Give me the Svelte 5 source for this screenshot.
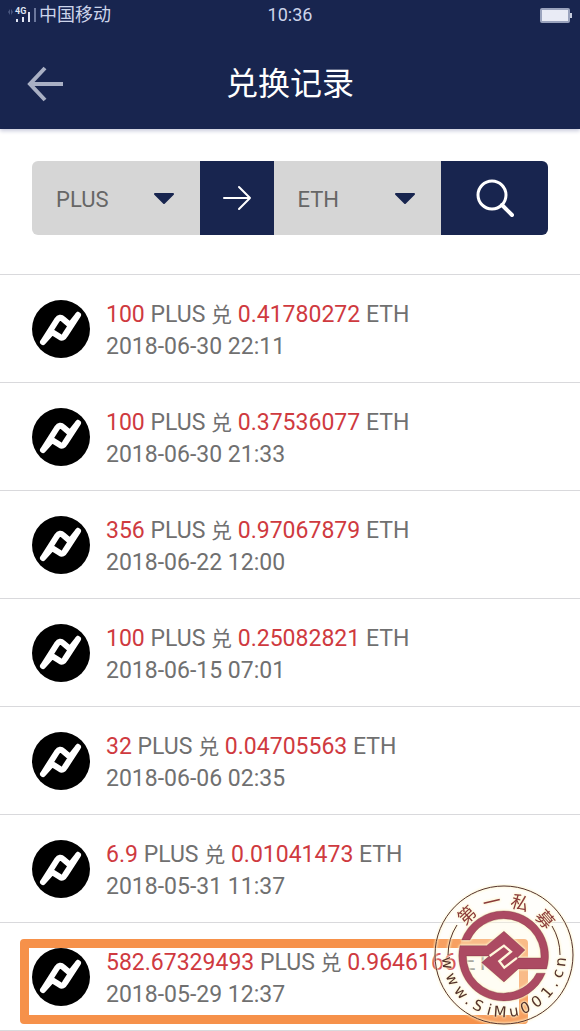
<script>
    let fromCoin = "PLUS";
    let toCoin = "ETH";

    const coins = ["PLUS", "ETH"];

    const records = [
        { pay: "100", get: "0.41780272", time: "2018-06-30 22:11" },
        { pay: "100", get: "0.37536077", time: "2018-06-30 21:33" },
        { pay: "356", get: "0.97067879", time: "2018-06-22 12:00" },
        { pay: "100", get: "0.25082821", time: "2018-06-15 07:01" },
        { pay: "32", get: "0.04705563", time: "2018-06-06 02:35" },
        { pay: "6.9", get: "0.01041473", time: "2018-05-31 11:37" },
        { pay: "582.67329493", get: "0.9646166", time: "2018-05-29 12:37", marked: true }
    ];

    // Seal lettering: character and its angle on the ring
    const sealTop = [["第", -43], ["一", -13], ["私", 17], ["募", 49]];
    const sealBottom = [
        ["w", 82], ["w", 65], ["w", 49], [".", 38], ["S", 27], ["i", 15], ["M", 4],
        ["u", -10], ["0", -22], ["0", -35], ["1", -49], [".", -60], ["c", -71], ["n", -83]
    ];
</script>

<main class="screen">
    <header>
        <div class="status">
            <div class="carrier">
                <svg width="32" height="22" viewBox="0 0 32 22" aria-hidden="true">
                    <path d="M3 5l-2 3 2 3zM4 5l2 3-2 3z" fill="#4a5880" />
                    <text x="8" y="10" class="net">4G</text>
                    <path d="M10 15v3M16 13v5M22 8v10" stroke="#dfe4f2" stroke-width="2" />
                    <path d="M28 4v14" stroke="#6b779c" stroke-width="2" />
                </svg>
                <span>中国移动</span>
            </div>
            <time>10:36</time>
            <svg class="battery" width="33" height="15" viewBox="0 0 33 15" aria-hidden="true">
                <rect x="1" y="1" width="28" height="13" rx="1" fill="#e9ebf5" stroke="#9aa3bd" stroke-width="2" />
                <rect x="30" y="5" width="2" height="5" fill="#c5cbdc" />
            </svg>
        </div>
        <nav>
            <button class="back" aria-label="返回">
                <svg width="38" height="36" viewBox="0 0 38 36" fill="none" stroke="#a9b0c4" stroke-width="4">
                    <path d="M19 2L4 18l15 16M4 18h33" />
                </svg>
            </button>
            <h1>兑换记录</h1>
        </nav>
    </header>

    <form class="filter" on:submit|preventDefault>
        <div class="picker">
            <select aria-label="支付币种" bind:value={fromCoin}>
                {#each coins as coin}
                    <option>{coin}</option>
                {/each}
            </select>
            <svg width="22" height="13" viewBox="0 0 22 13" aria-hidden="true">
                <path d="M2 2h18l-9 9z" fill="#18254f" stroke="#18254f" stroke-width="2" stroke-linejoin="round" />
            </svg>
        </div>
        <button type="button" class="swap" aria-label="互换">
            <svg width="30" height="26" viewBox="0 0 30 26" fill="none" stroke="#fff" stroke-width="2" stroke-linecap="round" stroke-linejoin="round">
                <path d="M2 13h26M17 2l11 11-11 11" />
            </svg>
        </button>
        <div class="picker">
            <select aria-label="兑换币种" bind:value={toCoin}>
                {#each coins as coin}
                    <option>{coin}</option>
                {/each}
            </select>
            <svg width="22" height="13" viewBox="0 0 22 13" aria-hidden="true">
                <path d="M2 2h18l-9 9z" fill="#18254f" stroke="#18254f" stroke-width="2" stroke-linejoin="round" />
            </svg>
        </div>
        <button class="search" aria-label="搜索">
            <svg width="38" height="38" viewBox="0 0 38 38" fill="none" stroke="#fff" stroke-width="3" stroke-linecap="round">
                <circle cx="16" cy="16" r="14" />
                <path d="M26 26l10 10" stroke-width="4" />
            </svg>
        </button>
    </form>

    <ul>
        {#each records as item}
            <li class:marked={item.marked}>
                <svg class="coin" viewBox="0 0 58 58" aria-hidden="true">
                    <circle cx="29" cy="29" r="29" />
                    <path
                        d="M11 42L25 20Q28 16 31 19L38 25L46 15M11 42L20 32L28 37Q31 39 33 35L46 15"
                        fill="none" stroke="#fff" stroke-width="6" stroke-linecap="round" stroke-linejoin="round"
                    />
                </svg>
                <div class="info">
                    <p><b>{item.pay}</b> PLUS <span>兑</span> <b>{item.get}</b> ETH</p>
                    <p>{item.time}</p>
                </div>
            </li>
        {/each}
    </ul>

    <svg class="seal" width="142" height="142" viewBox="0 0 142 142">
        <circle cx="71" cy="71" r="69" fill="#fffbe6" fill-opacity="0.15" />
        <circle cx="71" cy="71" r="45" fill="#fffbe6" fill-opacity="0.3" />
        <g class="glow">
            <circle cx="71" cy="71" r="69" fill="none" stroke="#54322c" stroke-width="1" />
            <path d="M24 41A56 56 0 0 0 15 71M119 42A56 56 0 0 1 127 71" fill="none" stroke="#54322c" stroke-width="1" />
            {#each sealTop as [char, angle]}
                <text class="top" x="71" y="23" transform="rotate({angle} 71 71)">{char}</text>
            {/each}
            {#each sealBottom as [char, angle]}
                <text class="bottom" x="71" y="133" transform="rotate({angle} 71 71)">{char}</text>
            {/each}
            <g transform="translate(22 21) scale(0.333)">
                <path
                    d="M20 105A135 135 0 0 1 146 18A135 135 0 0 1 275 192H190L147 231L80 173L103 153H34A112 112 0 0 0 146 265A112 112 0 0 0 245 205H271A135 135 0 0 1 146 288A135 135 0 0 1 15 122H95L147 79L210 135L186 159H258A112 112 0 0 0 146 41A112 112 0 0 0 45 105Z"
                    fill="#ac4a62" stroke="#6d2a3c" stroke-width="1"
                />
                <path d="M104 153L147 122L168 140L133 169L148 188L186 159" fill="none" stroke="#fff8dc" stroke-width="7" />
            </g>
        </g>
    </svg>
</main>

<style>
    :global(body) {
        margin: 0;
        background: #fff;
        font-family: Roboto, "Noto Sans CJK SC", sans-serif;
    }

    .screen { position: relative; overflow: hidden; }

    header {
        background: #18254f;
        color: #fff;
        box-shadow: 0 2px 4px #c9cbdc;
    }

    .status {
        display: grid;
        grid-template-columns: 1fr auto 1fr;
        align-items: center;
        height: 30px;
        padding: 0 7px;
        color: #ccd4ea;
        font-size: 18px;
        line-height: 28px;
    }
    .carrier { display: flex; align-items: center; }
    .carrier svg { flex: none; }
    .net { fill: #dfe4f2; font-size: 9px; font-weight: bold; }
    .battery { justify-self: end; }

    nav {
        display: grid;
        grid-template-columns: 64px 1fr 64px;
        align-items: center;
        box-sizing: border-box;
        height: 99px;
        padding-top: 9px;
    }
    h1 {
        margin: 0;
        font-size: 32px;
        font-weight: 400;
        line-height: 48px;
        text-align: center;
    }

    button {
        display: flex;
        align-items: center;
        justify-content: center;
        margin: 0;
        padding: 0;
        border: 0;
        background: #18254f;
        cursor: pointer;
    }
    .back { justify-content: flex-end; }

    .filter {
        display: flex;
        height: 74px;
        margin: 32px 32px 39px;
        border-radius: 6px;
        overflow: hidden;
    }
    .picker {
        position: relative;
        flex: 1;
        background: #d6d6d6;
    }
    .picker svg {
        position: absolute;
        top: 31px;
        right: 25px;
        pointer-events: none;
    }
    select {
        width: 100%;
        height: 100%;
        padding: 2px 24px 0;
        border: 0;
        background: none;
        color: #666;
        font-family: inherit;
        font-size: 22px;
        appearance: none;
    }
    .swap { width: 74px; }
    .search { width: 107px; }

    ul { margin: 0; padding: 0; list-style: none; border-bottom: 1px solid #d9d9dc; }
    li {
        position: relative;
        display: flex;
        align-items: center;
        gap: 16px;
        box-sizing: border-box;
        height: 108px;
        padding: 0 32px;
        border-top: 1px solid #d9d9dc;
    }
    .coin { flex: none; width: 58px; height: 58px; }
    .info { padding-top: 4px; }
    p {
        margin: 0;
        color: #707070;
        font-size: 23px;
        line-height: 31px;
        white-space: nowrap;
    }
    p span { font-size: 21px; }
    b { color: #cf3a3f; font-weight: 400; }

    .marked::after {
        content: "";
        position: absolute;
        inset: 16px 52px 6px 20px;
        border: 9px solid #f6914a;
        border-radius: 4px;
    }

    .seal { position: absolute; right: 5px; bottom: 5px; }
    .seal text { fill: #54322c; text-anchor: middle; }
    .seal .top { fill: #8a3a3a; font-family: "Noto Sans CJK SC", sans-serif; font-size: 18px; }
    .seal .bottom { font-family: "DejaVu Sans", sans-serif; font-size: 15px; }
    .glow { filter: drop-shadow(0 0 1px #fff6cf) drop-shadow(0 0 1px #fff6cf); }
</style>
